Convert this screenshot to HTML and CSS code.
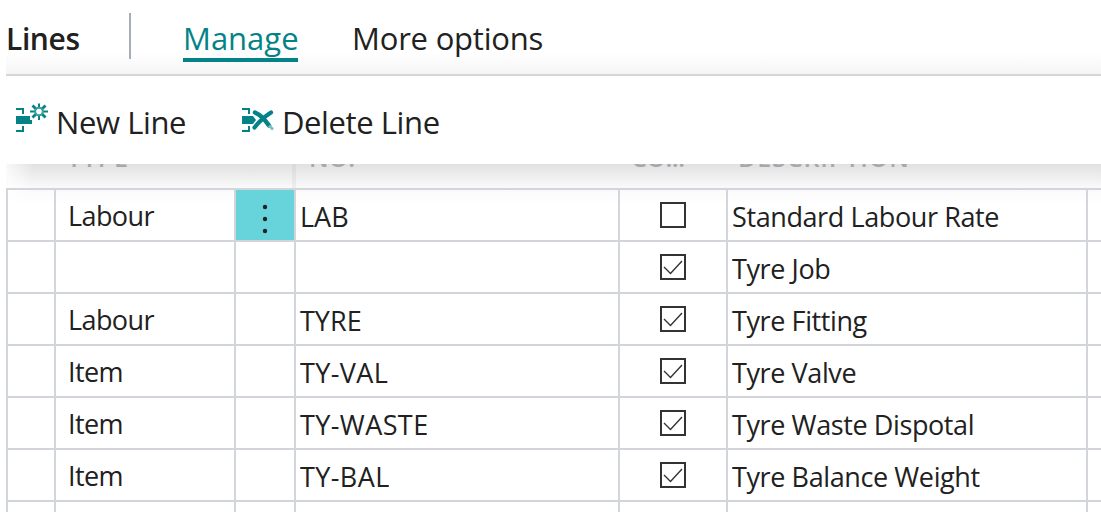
FILE: index.html
```
<!DOCTYPE html>
<html lang="en">
<head>
<meta charset="utf-8">
<title>Lines</title>
<link rel="stylesheet" href="styles.css">
</head>
<body>
<main class="part">
  <header class="tabs">
    <h2 class="title">Lines</h2>
    <span class="divider"></span>
    <a class="tab active">Manage</a>
    <a class="tab more">More options</a>
  </header>
  <div class="actions">
    <button class="action new"><svg class="icon" width="34" height="34" viewBox="0 0 34 34"><path d="M1 7h7v5M1 29h7v-5" fill="none" stroke="#038387" stroke-width="2"/><path d="M1 14h14v4h2v4H1z" fill="#038387"/><g stroke="#038387" stroke-width="2"><path d="M24 1.500v5M24 13v5M15 9.500h5M28 9.500h5"/><path d="M17.500 3.500l4 4M30.500 3.500l-4 4M17.500 15.500l4-4M30.500 15.500l-4-4" stroke-width="2.800"/></g><circle cx="24" cy="9.500" r="3.800" fill="none" stroke="#3b9da0" stroke-width="2"/></svg><span>New Line</span></button>
    <button class="action delete"><svg class="icon" width="34" height="34" viewBox="0 0 34 34"><path d="M1 7h7v5M1 29h7v-5" fill="none" stroke="#038387" stroke-width="2"/><path d="M1 14h11l3 4-3 4H1z" fill="#038387"/><path d="M14 10.500q7 3 14 13" fill="none" stroke="#038387" stroke-width="4.500" stroke-linecap="round"/><path d="M28 23.500l4 4" stroke="#77bcbe" stroke-width="2.500"/><path d="M30 10.500Q20 17 13.500 25.500" fill="none" stroke="#038387" stroke-width="4.200" stroke-linecap="round"/></svg><span>Delete Line</span></button>
  </div>
  <section class="list">
    <div class="head"><span></span><span class="h-type">TYPE</span><span class="h-no">NO.</span><span class="h-co">CO...</span><span class="h-desc">DESCRIPTION</span></div>
    <div class="row"><i></i><b class="type">Labour</b><i class="menu"><svg width="6" height="30" viewBox="0 0 6 30" fill="#212121"><circle cx="3" cy="3" r="2.200"/><circle cx="3" cy="15" r="2.200"/><circle cx="3" cy="27" r="2.200"/></svg></i><b class="no">LAB</b><i class="check"><span class="box"></span></i><b>Standard Labour Rate</b><i></i></div>
    <div class="row"><i></i><b class="type"></b><i></i><b></b><i class="check"><span class="box"><svg viewBox="0 0 22 22"><path d="M2 11l6.500 6.500L20 5"/></svg></span></i><b>Tyre Job</b><i></i></div>
    <div class="row"><i></i><b class="type">Labour</b><i></i><b class="no">TYRE</b><i class="check"><span class="box"><svg viewBox="0 0 22 22"><path d="M2 11l6.500 6.500L20 5"/></svg></span></i><b>Tyre Fitting</b><i></i></div>
    <div class="row"><i></i><b class="type">Item</b><i></i><b class="no code">TY-VAL</b><i class="check"><span class="box"><svg viewBox="0 0 22 22"><path d="M2 11l6.500 6.500L20 5"/></svg></span></i><b>Tyre Valve</b><i></i></div>
    <div class="row"><i></i><b class="type">Item</b><i></i><b class="no code">TY-WASTE</b><i class="check"><span class="box"><svg viewBox="0 0 22 22"><path d="M2 11l6.500 6.500L20 5"/></svg></span></i><b>Tyre Waste Dispotal</b><i></i></div>
    <div class="row"><i></i><b class="type">Item</b><i></i><b class="no code">TY-BAL</b><i class="check"><span class="box"><svg viewBox="0 0 22 22"><path d="M2 11l6.500 6.500L20 5"/></svg></span></i><b>Tyre Balance Weight</b><i></i></div>
    <div class="row"><i></i><b class="type"></b><i></i><b></b><i></i><b></b><i></i></div>
  </section>
</main>
</body>
</html>
```
FILE: styles.css
```
* { box-sizing: border-box; }
body { margin: 0; background: #fff; color: #212121; font-family: "Open Sans", "Noto Sans", sans-serif; overflow: hidden; }
.part { height: 512px; padding-left: 6px; overflow: hidden; }
.tabs { display: flex; height: 76px; border-bottom: 2px solid #d4d6da; background: linear-gradient(#fff 52px, #f5f5f5 74px); font-size: 31px; line-height: 44px; }
.title { margin: 17px 0 0; width: 123px; font-size: 30px; line-height: 44px; font-weight: 600; letter-spacing: -0.4px; }
.divider { width: 2px; height: 46px; margin-top: 13px; background: #a6acb8; }
.tab { height: 46px; margin-top: 16px; white-space: nowrap; }
.active { margin-left: 52px; width: 115px; color: #038387; border-bottom: 4px solid #038387; }
.more { margin-left: 54px; letter-spacing: -0.2px; }
.actions { display: flex; height: 88px; }
.action { display: flex; padding: 0; border: 0; background: none; color: inherit; font: 31px/44px "Open Sans", "Noto Sans", sans-serif; letter-spacing: -0.4px; white-space: nowrap; }
.action span { margin-top: 24px; }
.icon { margin: 26px 7px 0 9px; flex: none; }
.new { width: 226px; }
.list { background: linear-gradient(90deg, rgba(255,255,255,0.8), rgba(255,255,255,0) 28px), linear-gradient(#e1e1e1, #fafafa 24px, #fff 40px); }
.head { display: grid; grid-template-columns: 48px 238px 326px 108px 1fr; height: 24px; overflow: hidden; color: #a5a8ad; font-size: 25px; line-height: 30px; font-weight: 600; }
.head span { margin-top: -22px; height: 46px; white-space: nowrap; }
.h-type { padding-left: 13px; letter-spacing: 0.9px; }
.h-no { padding-left: 13px; border-left: 4px solid rgba(160,160,170,0.12); }
.h-co { padding-left: 13px; letter-spacing: -0.5px; }
.h-desc { padding-left: 12px; letter-spacing: 0.9px; }
.row { display: grid; grid-template-columns: 48px 180px 60px 324px 108px 360px 1fr; grid-template-rows: 50px; height: 52px; border-top: 2px solid #d2d5da; font-size: 27px; line-height: 46px; }
.row i, .row b { border-left: 2px solid #d2d5da; font-style: normal; font-weight: 400; white-space: nowrap; }
.row b { padding: 4px 0 0 4px; letter-spacing: -0.4px; }
.row .type { padding: 3px 0 0 12px; letter-spacing: -0.6px; }
.row .no { letter-spacing: 0; }
.row .code { letter-spacing: 0.4px; }
.menu { display: flex; justify-content: center; padding-top: 14px; background: #66d4da; }
.check { display: flex; padding: 12px 0 0 40px; }
.box { display: block; width: 26px; height: 26px; border: 2px solid #333; }
.box svg { display: block; width: 22px; height: 22px; fill: none; stroke: #333; stroke-width: 1.400; }
```
